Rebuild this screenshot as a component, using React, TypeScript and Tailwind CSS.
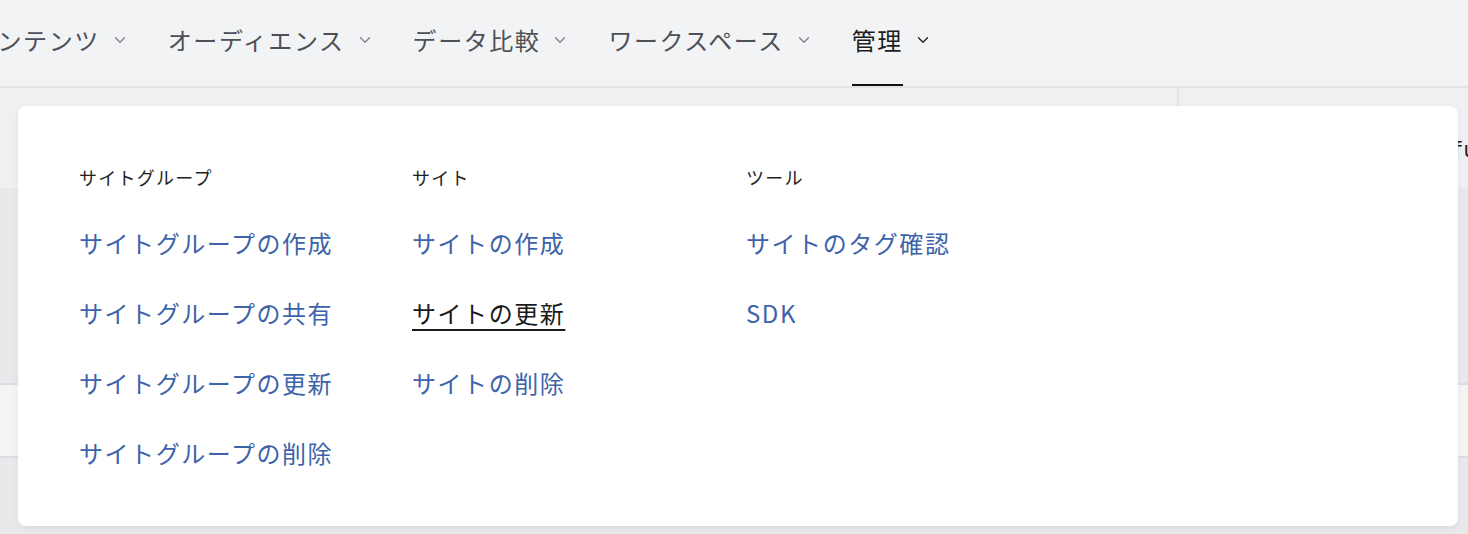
import * as React from 'react';

const FONT = { fontFamily: '"Noto Sans CJK JP", "Noto Sans", sans-serif' };

type NavItem = { label: string; active?: boolean };

const NAV: NavItem[] = [
  { label: 'コンテンツ' },
  { label: 'オーディエンス' },
  { label: 'データ比較' },
  { label: 'ワークスペース' },
  { label: '管理', active: true },
];

type MenuColumn = { title: string; links: { label: string; hover?: boolean }[] };

const MENU: MenuColumn[] = [
  {
    title: 'サイトグループ',
    links: [
      { label: 'サイトグループの作成' },
      { label: 'サイトグループの共有' },
      { label: 'サイトグループの更新' },
      { label: 'サイトグループの削除' },
    ],
  },
  {
    title: 'サイト',
    links: [
      { label: 'サイトの作成' },
      { label: 'サイトの更新', hover: true },
      { label: 'サイトの削除' },
    ],
  },
  {
    title: 'ツール',
    links: [{ label: 'サイトのタグ確認' }, { label: 'SDK' }],
  },
];

function Chevron({ active }: { active?: boolean }) {
  return (
    <svg
      width="12"
      height="8"
      viewBox="0 0 12 8"
      fill="none"
      className={active ? 'text-[#222]' : 'text-[#80838a]'}
    >
      <path d="M1.5 1.8 6 6.2l4.5-4.4" stroke="currentColor" strokeWidth="1.4" strokeLinecap="round" strokeLinejoin="round" />
    </svg>
  );
}

function TopNav() {
  return (
    <nav className="h-[88px] bg-[#f2f3f5] border-b-2 border-[#e2e3e5] flex items-stretch overflow-hidden">
      <div className="flex items-stretch ml-[-28px] gap-[42px]">
        {NAV.map((item) => (
          <div key={item.label} className="flex items-center gap-[14px] pb-[6px]">
            <span
              className={
                'relative h-full flex items-center text-[24px] tracking-[0.065em] ' +
                (item.active ? 'text-[#1c1c1e]' : 'text-[#4d5057]')
              }
            >
              {item.label}
              {item.active && (
                <span className="absolute left-0 right-0 bottom-[-8px] h-[4px] bg-[#111]" />
              )}
            </span>
            <Chevron active={item.active} />
          </div>
        ))}
      </div>
    </nav>
  );
}

function PageBehind() {
  return (
    <div className="flex flex-col">
      <div className="h-[100px] flex bg-[#eff0f2]">
        <div className="w-[1177px] h-[18px]" />
        <div className="flex-1 border-l-2 border-[#e2e3e5] flex items-center justify-end pt-[26px] overflow-hidden">
          <span className="text-[21px] text-[#222] font-['DejaVu_Sans_Mono'] mr-[-8px]">fu</span>
        </div>
      </div>
      <div className="h-[195px] bg-[#e8e9eb]" />
      <div className="h-[75px] bg-[#f4f4f5] border-y-2 border-[#dcdde0]" />
      <div className="h-[76px] bg-[#e8e9eb]" />
    </div>
  );
}

function AdminMenu() {
  return (
    <div className="absolute left-[18px] top-[106px] w-[1440px] h-[420px] bg-white rounded-[8px] shadow-[0_2px_6px_rgba(0,0,0,0.06)]">
      <div className="grid grid-cols-[333px_334px_333px] pl-[61px] pt-[58px]">
        {MENU.map((col) => (
          <div key={col.title} className="flex flex-col">
            <div className="text-[18px] leading-[26px] tracking-[0.07em] text-[#1f1f1f]">{col.title}</div>
            <ul className="flex flex-col gap-[38px] mt-[37px]">
              {col.links.map((link) => (
                <li key={link.label}>
                  <a
                    href="#"
                    className={
                      'text-[24px] leading-[32px] tracking-[0.065em] ' +
                      (link.hover
                        ? 'text-[#1a1a1a] underline decoration-2 underline-offset-[6px]'
                        : 'text-[#3d63a9]')
                    }
                  >
                    {link.label}
                  </a>
                </li>
              ))}
            </ul>
          </div>
        ))}
      </div>
    </div>
  );
}

export default function App() {
  return (
    <div className="relative w-[1468px] h-[534px] overflow-hidden bg-[#e8e9eb]" style={FONT}>
      <TopNav />
      <PageBehind />
      <AdminMenu />
    </div>
  );
}
